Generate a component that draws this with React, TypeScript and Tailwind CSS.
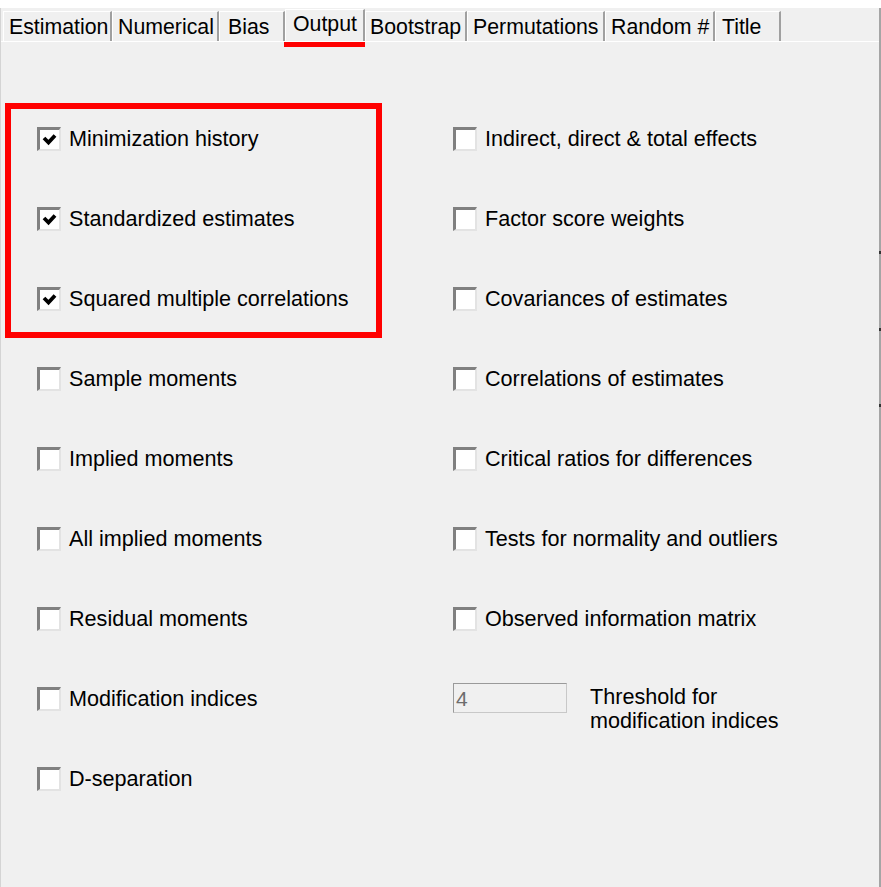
import React from "react";

const tabs = [
  { label: "Estimation", w: 109, pl: 5 },
  { label: "Numerical", w: 107, pl: 5 },
  { label: "Bias", w: 66, pl: 8 },
  { label: "Output", w: 80, pl: 7, active: true },
  { label: "Bootstrap", w: 102, pl: 4 },
  { label: "Permutations", w: 138, pl: 5 },
  { label: "Random #", w: 110, pl: 5 },
  { label: "Title", w: 66, pl: 6 },
];

function Check({ checked }: { checked?: boolean }) {
  return (
    <div className="w-[24px] h-[24px] border-t-[3px] border-l-[3px] border-t-[#808080] border-l-[#808080] border-b-2 border-r-2 border-b-[#e3e3e3] border-r-[#e3e3e3] bg-white flex items-center justify-center shrink-0">
      {checked && (
        <svg width="15" height="13" viewBox="0 0 15 13">
          <path d="M2 5 L6.5 9.5 L13 2.5" stroke="#000" strokeWidth="3.8" fill="none" />
        </svg>
      )}
    </div>
  );
}

function Item({ label, checked }: { label: string; checked?: boolean }) {
  return (
    <div className="flex items-center gap-[8px] h-[80px]">
      <Check checked={checked} />
      <span className="text-[21.6px] leading-none text-black">{label}</span>
    </div>
  );
}

const left = [
  { l: "Minimization history", c: true },
  { l: "Standardized estimates", c: true },
  { l: "Squared multiple correlations", c: true },
  { l: "Sample moments" },
  { l: "Implied moments" },
  { l: "All implied moments" },
  { l: "Residual moments" },
  { l: "Modification indices" },
  { l: "D-separation" },
];

const right = [
  "Indirect, direct & total effects",
  "Factor score weights",
  "Covariances of estimates",
  "Correlations of estimates",
  "Critical ratios for differences",
  "Tests for normality and outliers",
  "Observed information matrix",
];

export default function App() {
  return (
    <div
      className="relative w-[881px] h-[887px] bg-white overflow-hidden flex flex-col"
      style={{ fontFamily: '"Liberation Sans", Arial, sans-serif' }}
    >
      <div className="h-[8px] bg-white shrink-0" />
      <div className="flex-1 flex flex-col bg-[#f0f0f0] border-r-2 border-r-[#a5a5a5] border-l border-l-[#d4d4d4]">
        {/* Tab strip */}
        <div className="h-[33px] flex items-end pl-[2px] shrink-0 relative">
          {tabs.map((t) =>
            t.active ? (
              <div
                key={t.label}
                className="relative h-[32px] flex items-center bg-[#f0f0f0] border-t border-l border-white border-r-2 border-r-[#a0a0a0]"
                style={{ width: t.w, paddingLeft: t.pl }}
              >
                <span className="text-[21.3px] leading-none -mt-[2px]">{t.label}</span>
                <div className="absolute left-[-2px] right-[-2px] bottom-[-6px] h-[5px] bg-[#ff0000]" />
              </div>
            ) : (
              <div
                key={t.label}
                className="h-[30px] flex items-center bg-[#f0f0f0] border-t border-l border-white border-r-2 border-r-[#a0a0a0]"
                style={{ width: t.w, paddingLeft: t.pl }}
              >
                <span className="text-[21.3px] leading-none mt-[2px]">{t.label}</span>
              </div>
            )
          )}
        </div>
        <div className="h-[1px] bg-white shrink-0" />
        {/* Panel */}
        <div className="relative flex-1 pt-[57px]">
          <div className="absolute left-[4px] top-[61px] w-[377px] h-[235px] border-[6px] border-[#ff0000]" />
          <div className="flex">
            <div className="w-[452px] pl-[36px] flex flex-col">
              {left.map((i) => (
                <Item key={i.l} label={i.l} checked={i.c} />
              ))}
            </div>
            <div className="flex flex-col">
              {right.map((r) => (
                <Item key={r} label={r} />
              ))}
              <div className="flex items-center h-[80px]">
                <div className="w-[114px] h-[30px] border border-[#c8c8c8] border-t-[#9a9a9a] border-l-[#9a9a9a] bg-[#f0f0f0] flex items-center pl-[2px] text-[21px] leading-none text-[#6d6d6d] -mt-[2px]">
                  4
                </div>
                <div className="ml-[23px] text-[21.6px] leading-[24px] text-black mt-[20px]">
                  <div>Threshold for</div>
                  <div>modification indices</div>
                </div>
              </div>
            </div>
          </div>
        </div>
      </div>
      <div className="absolute right-0 top-[251px] w-[2px] h-[3px] bg-[#333]" />
      <div className="absolute right-0 top-[328px] w-[2px] h-[3px] bg-[#333]" />
      <div className="absolute right-0 top-[404px] w-[2px] h-[3px] bg-[#333]" />
    </div>
  );
}
